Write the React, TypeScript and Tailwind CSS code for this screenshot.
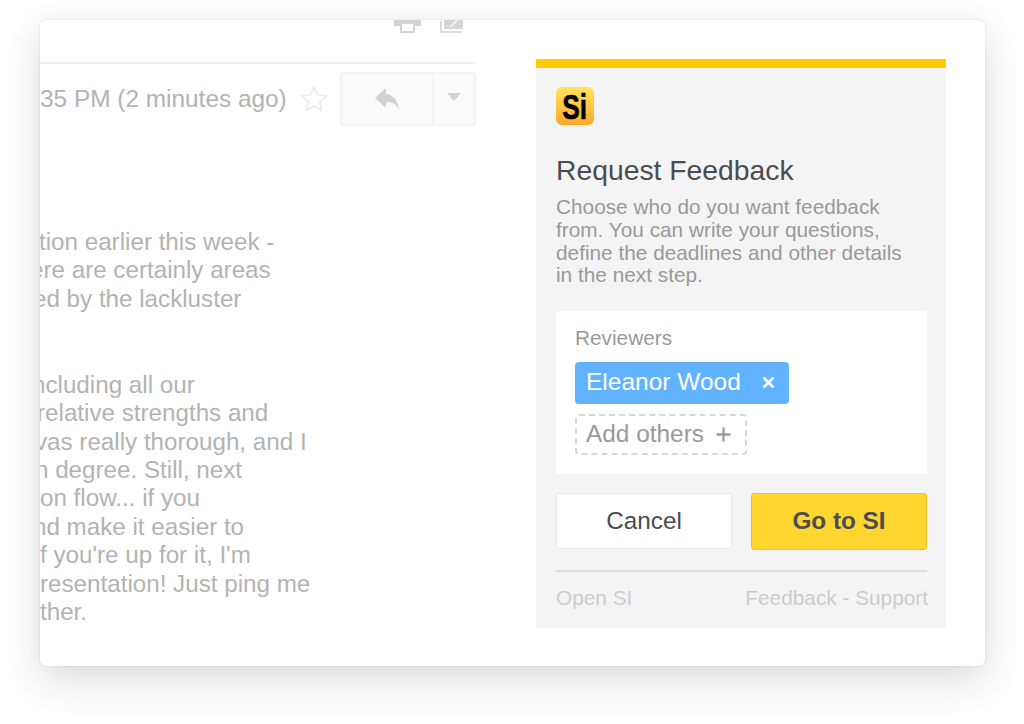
import React from "react";
import { Plus, X } from "lucide-react";

// the email is cut off by the card's left edge, so lines start a few px outside it
const firstPara = [
  { text: "tion earlier this week -", cls: "-ml-[1px]" },
  { text: "ere are certainly areas", cls: "-ml-[10px]" },
  { text: "ed by the lackluster", cls: "-ml-[7px]" },
];
const secondPara = [
  { text: "ncluding all our", cls: "-ml-[8px]" },
  { text: "relative strengths and", cls: "-ml-[3px]" },
  { text: "vas really thorough, and I", cls: "-ml-[5px]" },
  { text: "n degree. Still, next", cls: "-ml-[5px]" },
  { text: "on flow... if you", cls: "ml-0" },
  { text: "nd make it easier to", cls: "-ml-[7px]" },
  { text: "f you're up for it, I'm", cls: "ml-0" },
  { text: "resentation! Just ping me", cls: "ml-0" },
  { text: "ther.", cls: "ml-0" },
];
const intro = [
  "Choose who do you want feedback",
  "from. You can write your questions,",
  "define the deadlines and other details",
  "in the next step.",
];

function ToolbarIcons() {
  return (
    <div className="flex h-[44px] justify-end gap-[19px] overflow-hidden border-b-2 border-[#f0f0f0] bg-white pr-[13px]">
      <svg width="27" height="13" viewBox="0 0 27 13" className="shrink-0">
        <path d="M0 0h27v6h-6v-2H6v2H0z" fill="#d2d2d2" />
        <path d="M7 3h13v9H7z" fill="none" stroke="#d2d2d2" strokeWidth="2" />
      </svg>
      <svg width="23" height="13" viewBox="0 0 23 13" className="shrink-0">
        <path d="M1 1v11h21" fill="none" stroke="#d2d2d2" strokeWidth="1.6" />
        <path d="M4 0h19v9H4z" fill="#d6d6d6" />
        <path d="M9 7l7-7h3l-8 7z" fill="#f4f4f4" />
      </svg>
    </div>
  );
}

function ReplyRow() {
  return (
    <div className="mt-[8px] flex h-[54px] items-center justify-between">
      <div className="flex items-center">
        <span className="text-[24.4px] leading-none text-[#b3b3b3]">35 PM (2 minutes ago)</span>
        <svg width="30" height="30" viewBox="0 0 24 24" className="ml-[12px]">
          <path
            d="M12 2.5l2.9 6.3 6.9.8-5.1 4.7 1.4 6.8-6.1-3.4-6.1 3.4 1.4-6.8-5.1-4.7 6.9-.8z"
            fill="none"
            stroke="#ebebeb"
            strokeWidth="1.2"
          />
        </svg>
      </div>
      <div className="flex h-[54px] w-[136px] rounded-[4px] border-2 border-[#f4f4f4] bg-[#fbfbfb]">
        <div className="flex flex-1 items-center justify-center border-r-2 border-[#f4f4f4]">
          <svg width="26" height="24" viewBox="0 0 26 24">
            <path d="M12 1L1 11l11 10v-6c6 0 10 2 13 8-1-9-5-15-13-16z" fill="#d2d2d2" />
          </svg>
        </div>
        <div className="flex w-[40px] items-center justify-center pb-[4px]">
          <svg width="14" height="8" viewBox="0 0 14 8">
            <path d="M0 0h14L7 8z" fill="#d2d2d2" />
          </svg>
        </div>
      </div>
    </div>
  );
}

function EmailColumn() {
  return (
    <div className="flex w-[436px] shrink-0 flex-col">
      <ToolbarIcons />
      <ReplyRow />
      <div className="mt-[102px] text-[24.2px] leading-[28.4px] text-[#b3b3b3]">
        {firstPara.map((line) => (
          <div key={line.text} className={line.cls}>
            {line.text}
          </div>
        ))}
      </div>
      <div className="mt-[57.5px] text-[24.2px] leading-[28.4px] text-[#b3b3b3]">
        {secondPara.map((line) => (
          <div key={line.text} className={line.cls}>
            {line.text}
          </div>
        ))}
      </div>
    </div>
  );
}

function FeedbackPanel() {
  return (
    <div className="ml-[60px] mt-[39px] h-[569px] w-[410px] border-t-[9px] border-[#ffcc00] bg-[#f4f4f4] px-[20px] pt-[19px]">
      <div className="flex h-[38px] w-[38px] items-center justify-center rounded-[6px] bg-gradient-to-b from-[#ffe45c] to-[#fca726]">
        <span className="inline-block scale-x-[0.75] text-[35px] font-bold leading-none text-black [-webkit-text-stroke:0.6px_black]">
          Si
        </span>
      </div>
      <h2 className="mt-[27px] text-[28.3px] font-normal leading-[36px] text-[#4a4d50]">Request Feedback</h2>
      <div className="mt-[8px] text-[20.8px] leading-[22.8px] text-[#999999]">
        {intro.map((line) => (
          <div key={line} className="whitespace-nowrap">
            {line}
          </div>
        ))}
      </div>

      <div className="mt-[24px] h-[163px] w-[371px] rounded-[2px] bg-white px-[19px] pt-[15px]">
        <div className="text-[20.8px] leading-[24px] text-[#999999]">Reviewers</div>
        <div className="mt-[12px] flex h-[42px] w-[214px] items-center justify-between rounded-[4px] bg-[#62b3ff] pb-[1px] pl-[11px] pr-[12px] text-[24.5px] text-white">
          <span>Eleanor Wood</span>
          <X size={17} strokeWidth={3.6} />
        </div>
        <div className="mt-[10px] flex h-[41px] w-[172px] items-center justify-between rounded-[4px] border-2 border-dashed border-[#d8d8d8] pl-[9px] pr-[11px] text-[24.4px] text-[#999999]">
          <span>Add others</span>
          <Plus size={21} strokeWidth={2.6} />
        </div>
      </div>

      <div className="mt-[19px] flex w-[371px] justify-between">
        <button className="h-[56px] w-[176px] rounded-[3px] border border-[#e8e8e8] bg-white text-[24.3px] text-[#4a4d50]">
          Cancel
        </button>
        <button className="h-[57px] w-[176px] rounded-[3px] border border-[#eec22e] bg-[#ffd530] text-[24.3px] font-bold text-[#4a4d50]">
          Go to SI
        </button>
      </div>

      <div className="mt-[20px] flex w-[371px] justify-between border-t-2 border-[#dfdfdf] pt-[14px] text-[20.8px] leading-[24px] text-[#cccccc]">
        <span>Open SI</span>
        <span className="-mr-[1px]">Feedback - Support</span>
      </div>
    </div>
  );
}

export default function App() {
  return (
    <div className="h-[724px] w-[1024px] overflow-hidden bg-white pl-[40px] pt-[20px] font-['Liberation_Sans',Arial,sans-serif]">
      <div className="flex h-[646px] w-[945px] overflow-hidden rounded-[6px] bg-white shadow-[0_16px_40px_rgba(0,0,0,0.12),0_0_30px_rgba(0,0,0,0.04),0_0_2px_rgba(0,0,0,0.14)]">
        <EmailColumn />
        <FeedbackPanel />
      </div>
    </div>
  );
}
